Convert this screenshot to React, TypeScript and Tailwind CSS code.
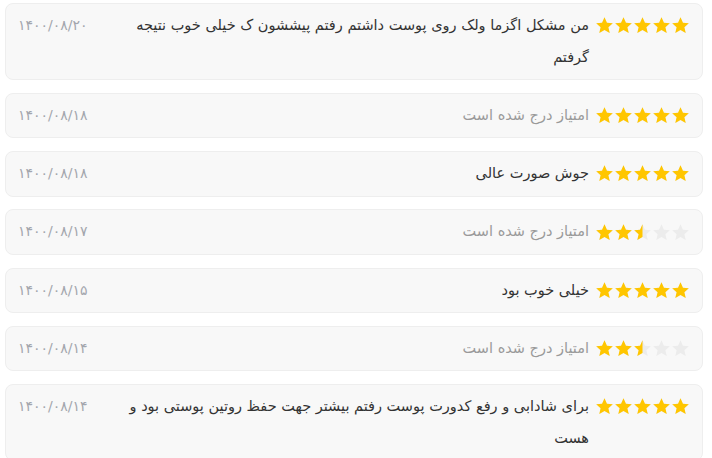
import React from "react";

type Review = {
  rating: number;
  text?: string;
  date: string;
};

const reviews: Review[] = [
  {
    rating: 5,
    text: "من مشکل اگزما ولک روی پوست داشتم رفتم پیششون ک خیلی خوب نتیجه گرفتم",
    date: "۱۴۰۰/۰۸/۲۰",
  },
  { rating: 5, date: "۱۴۰۰/۰۸/۱۸" },
  { rating: 5, text: "جوش صورت عالی", date: "۱۴۰۰/۰۸/۱۸" },
  { rating: 2.5, date: "۱۴۰۰/۰۸/۱۷" },
  { rating: 5, text: "خیلی خوب بود", date: "۱۴۰۰/۰۸/۱۵" },
  { rating: 2.5, date: "۱۴۰۰/۰۸/۱۴" },
  {
    rating: 5,
    text: "برای شادابی و رفع کدورت پوست رفتم بیشتر جهت حفظ روتین پوستی بود و هست",
    date: "۱۴۰۰/۰۸/۱۴",
  },
];

const STAR = "M12 1.5l3.1 6.9 7.4.7-5.6 5 1.7 7.4L12 17.6l-6.6 3.9 1.7-7.4-5.6-5 7.4-.7z";

function Star({ fill }: { fill: number }) {
  const id = `clip-${Math.round(fill * 100)}`;
  return (
    <svg viewBox="0 0 24 24" className="h-[19px] w-[19px]">
      <path d={STAR} fill="#ececec" />
      {fill > 0 && (
        <>
          <defs>
            <clipPath id={id}>
              <rect x="0" y="0" width={24 * fill} height="24" />
            </clipPath>
          </defs>
          <path d={STAR} fill="#ffc600" clipPath={`url(#${id})`} />
        </>
      )}
    </svg>
  );
}

function Stars({ rating }: { rating: number }) {
  return (
    <div dir="ltr" className="flex shrink-0 items-center h-[31.5px]">
      {[0, 1, 2, 3, 4].map((i) => (
        <Star key={i} fill={Math.max(0, Math.min(1, rating - i))} />
      ))}
    </div>
  );
}

export default function App() {
  return (
    <div
      dir="rtl"
      className="flex flex-col gap-[12.75px] bg-white pl-[5px] pr-[9px] pt-[3px] h-[458px] overflow-hidden"
      style={{ fontFamily: '"DejaVu Sans", sans-serif' }}
    >
      {reviews.map((r, index) => (
        <div
          key={index}
          className="flex items-start rounded-lg border border-[#eeeeee] bg-[#f8f8f8] px-3 py-[6px]"
        >
          <Stars rating={r.rating} />
          <p
            className={`mr-[6px] flex-1 text-[14.5px] leading-[31.5px] ${
              r.text ? "text-[#333333]" : "text-[#9a9a9a]"
            }`}
          >
            {r.text ?? "امتیاز درج شده است"}
          </p>
          <span className="w-[100px] shrink-0 text-left text-[14px] leading-[31.5px] text-[#a3a6ad]">
            {r.date}
          </span>
        </div>
      ))}
    </div>
  );
}
